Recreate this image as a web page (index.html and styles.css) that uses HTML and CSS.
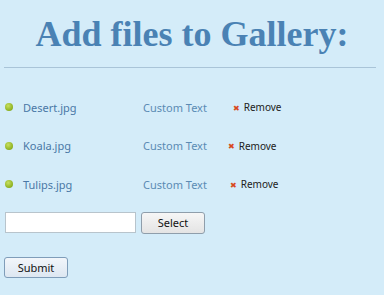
FILE: index.html
```html
<!DOCTYPE html>
<html>
<head>
<meta charset="utf-8">
<link rel="stylesheet" href="styles.css">
</head>
<body>
<h1 class="title">Add files to Gallery:</h1>
<hr class="rule">
<ul class="files">
  <li class="file">
    <span class="file-name"><span class="dot"></span>Desert.jpg</span>
    <span class="custom">Custom Text</span>
    <a class="remove remove-a"><span class="x">✖</span>Remove</a>
  </li>
  <li class="file">
    <span class="file-name"><span class="dot"></span>Koala.jpg</span>
    <span class="custom">Custom Text</span>
    <a class="remove remove-b"><span class="x">✖</span>Remove</a>
  </li>
  <li class="file">
    <span class="file-name"><span class="dot"></span>Tulips.jpg</span>
    <span class="custom">Custom Text</span>
    <a class="remove remove-c"><span class="x">✖</span>Remove</a>
  </li>
</ul>
<div class="picker">
  <input class="path" type="text">
  <button class="btn select">Select</button>
</div>
<button class="btn submit">Submit</button>
</body>
</html>
```
FILE: styles.css
```css
html, body {
  margin: 0;
  background: #d4ecf9;
}
body {
  padding: 0 4px;
  font-family: "Noto Sans", "DejaVu Sans", sans-serif;
  font-size: 11px;
}
.title {
  margin: 0;
  padding-top: 14px;
  height: 48px;
  box-sizing: border-box;
  text-align: center;
  font-family: "Liberation Serif", serif;
  font-weight: bold;
  font-size: 36px;
  line-height: 40px;
  color: #4a82b4;
}
.rule {
  margin: 19px 4px 0 0;
  border: 0;
  height: 1px;
  background: #a9c4d8;
}
.files {
  list-style: none;
  margin: 0;
  padding: 28px 0 0 0;
}
.file {
  display: flex;
  align-items: center;
  height: 38.5px;
  margin-top: -8px;
  margin-bottom: 8px;
}
.file-name {
  display: flex;
  align-items: center;
  width: 139px;
  color: #4a78a6;
}
.dot {
  width: 8px;
  height: 8px;
  border-radius: 50%;
  background: radial-gradient(circle at 40% 35%, #c8e060, #8cb020 70%, #6f9418);
  margin: 0 10px 0 1px;
}
.custom {
  color: #5b8bb4;
  width: 85px;
}
.remove {
  color: #222;
  font-size: 10px;
  display: flex;
  align-items: center;
}
.remove-a { margin-left: 5px; }
.remove-b { margin-left: 0; }
.remove-c { margin-left: 2px; }
.x {
  color: #d84a1c;
  font-size: 8px;
  margin-right: 4px;
}
.picker {
  display: flex;
  gap: 5px;
  margin-top: 0;
  margin-left: 1px;
}
.path {
  width: 131px;
  height: 21px;
  box-sizing: border-box;
  border: 1px solid #b8c4cc;
  background: #fff;
  padding: 0;
  margin: 0;
}
.btn {
  font-family: "Noto Sans", "DejaVu Sans", sans-serif;
  font-size: 11px;
  color: #111;
  border: 1px solid #8f9eab;
  border-radius: 3px;
  background: linear-gradient(#f6f6f6, #e4e4e4);
  padding: 0;
  margin: 0;
}
.select {
  width: 64px;
  height: 22px;
}
.submit {
  display: block;
  width: 64px;
  height: 21px;
  margin-top: 23px;
  border-color: #7f9db9;
  background: linear-gradient(#f2f6fb, #dde7f1);
}
```
